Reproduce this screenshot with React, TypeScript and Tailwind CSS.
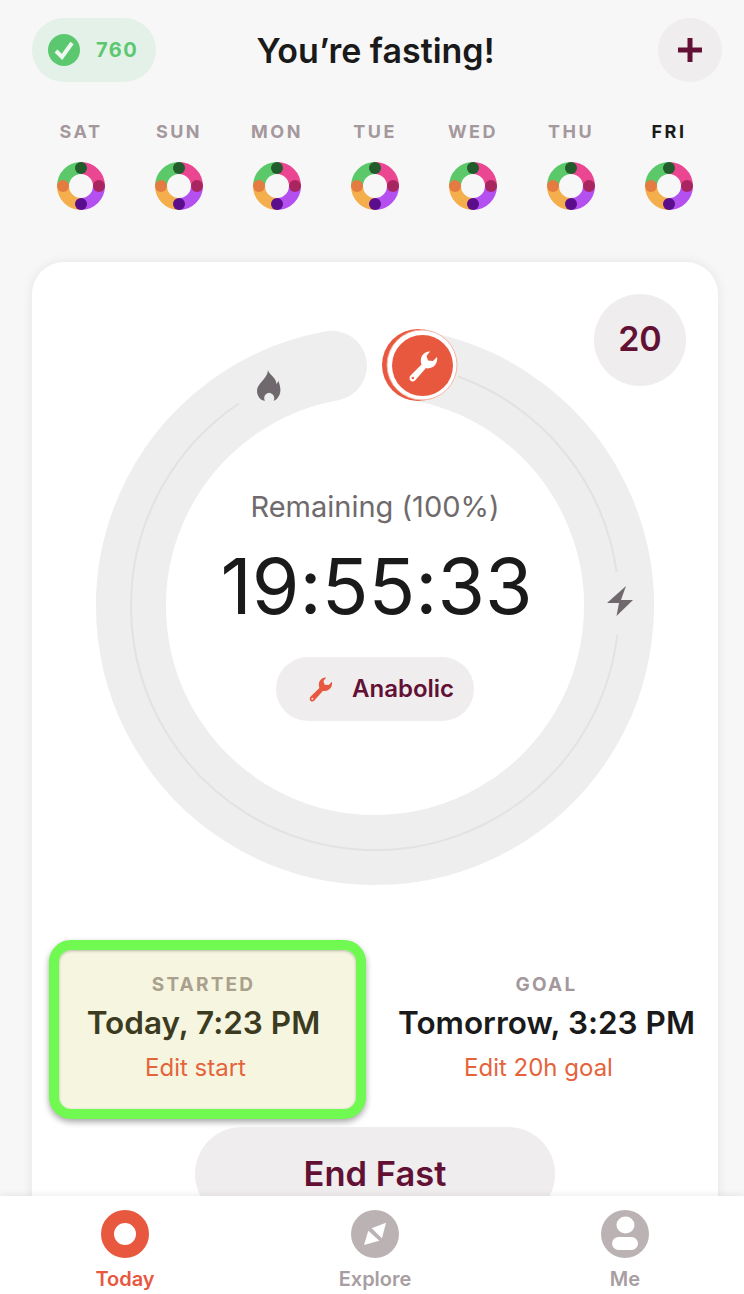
const days = ["SAT", "SUN", "MON", "TUE", "WED", "THU", "FRI"];

function Wrench({ className }: { className: string }) {
  return (
    <svg className={className} viewBox="9 8 29 31" fill="currentColor">
      <path
        fillRule="evenodd"
        d="M30 8.500L26.500 13L28 17.500L33 18L37 14C38 19 35 24 30 25C28 25.500 27 25.500 26 25L15 37.500C13 39.500 9.500 38.500 9.500 35C9.500 34 10 33 11 32L21.500 21.500C20 17 21 13 24 10.500C26 9 28 8.500 30 8.500ZM12.800 33.800A1.200 1.200 0 1 0 12.801 36.200A1.200 1.200 0 1 0 12.800 33.800Z"
      />
    </svg>
  );
}

function DayRing() {
  return (
    <svg width="48" height="48" viewBox="0 0 48 48">
      <path d="M24 0A24 24 0 0 1 48 24H36A12 12 0 0 0 24 12Z" fill="#ea4691" />
      <path d="M48 24A24 24 0 0 1 24 48V36A12 12 0 0 0 36 24Z" fill="#b44ff0" />
      <path d="M24 48A24 24 0 0 1 0 24H12A12 12 0 0 0 24 36Z" fill="#f4ae4c" />
      <path d="M0 24A24 24 0 0 1 24 0V12A12 12 0 0 0 12 24Z" fill="#5bc86a" />
      <circle cx="24" cy="6" r="6" fill="#225c2c" />
      <circle cx="42" cy="24" r="6" fill="#a82560" />
      <circle cx="24" cy="42" r="6" fill="#5b0e8c" />
      <circle cx="6" cy="24" r="6" fill="#e47c42" />
    </svg>
  );
}

function Dial() {
  return (
    <svg width="560" height="560" viewBox="0 0 560 560" fill="none">
      <path d="M325 40.190A244 244 0 1 1 237 39.820" stroke="#eeeeee" strokeWidth="70" strokeLinecap="round" />
      <path d="M363 50.550A244 244 0 0 1 521.600 246" stroke="#e2e2e2" strokeWidth="2" />
      <path d="M522.270 309A244 244 0 1 1 144 77.420" stroke="#e2e2e2" strokeWidth="2" />
      <path
        transform="translate(162 44)"
        d="M11 0C12 5 19 7 19.500 14C20.500 13 21 12 21.300 10.500C22.700 14.500 23.400 17.500 23.400 20C23.400 26 19 30.700 16.700 30.700C18 28 17.300 23.500 12 22.700C8 23.300 6 27.500 8 30.700C3.500 30.700 0 26 0 20.700C0 13.500 10.500 9 11 0Z"
        fill="#6f696d"
      />
      <path
        transform="translate(512 260)"
        d="M19 0L0 17H12L9.500 30L26 14H14Z"
        fill="#6f696d"
      />
      <circle cx="323" cy="39" r="36" fill="#e8583f" />
      <circle cx="327" cy="39" r="35" fill="#ffffff" stroke="#f4b5a8" strokeWidth="1" />
      <circle cx="327.500" cy="39.500" r="30.500" fill="#e8583f" />
    </svg>
  );
}

export default function App() {
  return (
    <div className="relative h-[1294px] w-[744px] overflow-hidden bg-[#f7f7f7] font-['Inter',sans-serif] [font-feature-settings:'calt'_0]">
      <header className="grid grid-cols-[124px_1fr_124px] items-center pl-8 pr-[22px] pt-[18px]">
        <div className="flex h-16 w-[124px] items-center rounded-full bg-[#e3f1e9] pl-4">
          <svg width="32" height="32" viewBox="0 0 32 32">
            <circle cx="16" cy="16" r="16" fill="#5bc870" />
            <path d="M8 17l6 6L24 9" fill="none" stroke="#eef8f0" strokeWidth="4" />
          </svg>
          <span className="ml-4 text-[20px] font-bold tracking-[1.5px] text-[#5bc870]">760</span>
        </div>
        <h1 className="pr-[3px] text-center text-[34px] font-semibold whitespace-nowrap text-[#1a1a1a]">You’re fasting!</h1>
        <div className="flex h-16 w-16 items-center justify-center justify-self-end rounded-full bg-[#efedee]">
          <svg width="24" height="24" viewBox="0 0 24 24">
            <path d="M9.500 0h5v9.500H24v5h-9.500V24h-5v-9.500H0v-5h9.500Z" fill="#621033" />
          </svg>
        </div>
      </header>

      <div className="mt-[37px] ml-8 grid w-[686px] grid-cols-7">
        {days.map((day) => (
          <div key={day} className="flex flex-col items-center gap-[17px]">
            <span className={`text-[18px] leading-[26px] font-bold tracking-[2.500px] ${day === "FRI" ? "text-[#1a1a1a]" : "text-[#a4989d]"}`}>
              {day}
            </span>
            <DayRing />
          </div>
        ))}
      </div>

      <main className="relative mx-8 mt-[52px] h-[1100px] w-[686px] rounded-[32px] bg-white shadow-[0_0_12px_rgba(0,0,0,0.08)]">
        <div className="absolute top-8 right-8 flex h-[92px] w-[92px] items-center justify-center rounded-full bg-[#efedee] pb-[3px] text-[34px] font-semibold text-[#621033]">
          20
        </div>

        <div className="relative mx-auto w-[560px] pt-[64px]">
          <Dial />
          <div className="absolute inset-x-0 top-[228px] flex flex-col items-center">
            <span className="text-[29px] leading-[34px] text-[#6f6a6c]">Remaining (100%)</span>
            <span className="mt-[19px] pl-[3px] text-[77px] leading-[86px] font-normal text-[#1a1a1a]">19:55:33</span>
            <div className="mt-[28px] flex h-16 w-[198px] items-center gap-[19px] rounded-full bg-[#efedee] pl-[33px]">
              <Wrench className="h-[25px] w-[24px] text-[#e8583f]" />
              <span className="text-[24px] font-semibold text-[#621033]">Anabolic</span>
            </div>
          </div>
          <Wrench className="absolute top-[89px] left-[314px] h-[31px] w-[29px] text-white" />
        </div>

        <div className="relative mt-[54px] grid grid-cols-2">
          <div className="mx-[17px] flex h-[179px] w-[317px] flex-col items-center rounded-[22px] border-[10px] border-[#70f950] bg-[#f5f5e0] pt-[21px] pr-2 shadow-[0_3px_6px_rgba(0,0,0,0.35),inset_0_1px_3px_rgba(0,0,0,0.25)]">
            <span className="text-[19px] leading-[28px] font-bold tracking-[2.200px] text-[#aaa08c]">STARTED</span>
            <span className="mt-[5px] text-[31.500px] leading-[38px] font-semibold text-[#3d3b1f]">Today, 7:23 PM</span>
            <span className="mt-[10px] pr-4 text-[24px] leading-[32px] text-[#e5633c]">Edit start</span>
          </div>
          <div className="flex flex-col items-center pt-[31px]">
            <span className="text-[19px] leading-[28px] font-bold tracking-[2.200px] text-[#a4989d]">GOAL</span>
            <span className="mt-[5px] text-[31.500px] leading-[38px] font-semibold text-[#1a1a1a]">Tomorrow, 3:23 PM</span>
            <span className="mt-[10px] pr-4 text-[24px] leading-[32px] text-[#e5633c]">Edit 20h goal</span>
          </div>
        </div>

        <button className="absolute top-[865px] left-[163px] h-[94px] w-[360px] rounded-full bg-[#efedee] text-[34.500px] font-semibold text-[#621033]">
          End Fast
        </button>
      </main>

      <nav className="absolute inset-x-0 bottom-0 grid h-[98px] grid-cols-[250px_250px_250px] bg-white pt-[14px] shadow-[0_0_8px_rgba(0,0,0,0.1)]">
        <div className="flex flex-col items-center gap-[7px]">
          <svg width="48" height="48" viewBox="0 0 48 48">
            <circle cx="24" cy="24" r="17.500" fill="none" stroke="#e8583f" strokeWidth="13" />
          </svg>
          <span className="text-[20px] leading-[28px] font-semibold text-[#e8583f]">Today</span>
        </div>
        <div className="flex flex-col items-center gap-[7px]">
          <svg width="48" height="48" viewBox="0 0 48 48">
            <circle cx="24" cy="24" r="24" fill="#bbb2b4" />
            <path d="M20.700 18.300L35 12.700L31 28.300Z M17.300 20.700L28.300 30.700L13 35Z" fill="#ffffff" />
          </svg>
          <span className="text-[20px] leading-[28px] font-semibold text-[#a89ea2]">Explore</span>
        </div>
        <div className="flex flex-col items-center gap-[7px]">
          <svg width="48" height="48" viewBox="0 0 48 48">
            <circle cx="24" cy="24" r="24" fill="#bbb2b4" />
            <ellipse cx="24.500" cy="15" rx="9" ry="8.500" fill="#ffffff" />
            <rect x="11" y="27" width="26" height="13" rx="6.500" fill="#ffffff" />
          </svg>
          <span className="text-[20px] leading-[28px] font-semibold text-[#a89ea2]">Me</span>
        </div>
      </nav>
    </div>
  );
}
